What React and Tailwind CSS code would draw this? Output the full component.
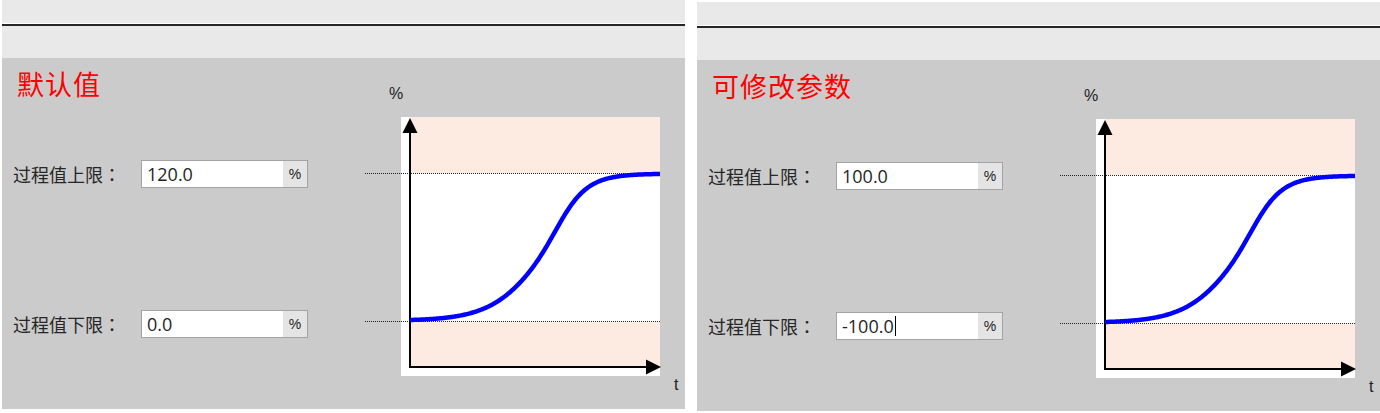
import React from 'react';

const CJK = { fontFamily: '"Noto Sans CJK SC", "Noto Sans", sans-serif' };
const CJK_CENTERED = { fontFamily: '"Noto Sans CJK TC", "Noto Sans CJK SC", sans-serif' };

// S-shaped ramp from the low limit (y=203) to the high limit (y=57).
// Logistic whose width eases from wide (left tail) to narrower (right shoulder).
const sig = (x) => {
    const s = 22 - 4 * Math.tanh((x - 181) / 30);
    return 1 / (1 + Math.exp(-(x - 181) / s));
};

const buildCurve = () => {
    const f0 = sig(45);
    const f1 = sig(295);
    const pts = [];
    for (let x = 45; x <= 295; x += 1) {
        const y = 203 - 146 * (sig(x) - f0) / (f1 - f0);
        pts.push(`${x},${y.toFixed(2)}`);
    }
    return 'M' + pts.join(' L');
};

const curve = buildCurve();

const LimitChart = () => (
    <svg width="297" height="260" viewBox="0 0 297 260" className="block">
        <rect x="36" y="0" width="259" height="259" fill="#ffffff" />
        <rect x="45" y="0" width="250" height="56" fill="#fdebe1" />
        <rect x="45" y="205" width="250" height="45" fill="#fdebe1" />
        <line x1="0" y1="56.5" x2="295" y2="56.5" stroke="#222" strokeWidth="1" strokeDasharray="1 1" />
        <line x1="0" y1="204.5" x2="295" y2="204.5" stroke="#222" strokeWidth="1" strokeDasharray="1 1" />
        {/* axes */}
        <line x1="45" y1="251" x2="45" y2="12" stroke="#000" strokeWidth="2" />
        <polygon points="45,1 37.5,16 52.5,16" fill="#000" />
        <line x1="44" y1="250" x2="283" y2="250" stroke="#000" strokeWidth="2" />
        <polygon points="296,250 281,242.5 281,257.5" fill="#000" />
        <path d={curve} fill="none" stroke="#0000ff" strokeWidth="4.5" strokeLinejoin="round" />
    </svg>
);

const LimitField = ({ label, value, caret }) => (
    <div className="flex items-center">
        <span className="w-[128px] text-[18px] leading-none text-[#262626]" style={CJK}>
            {label}
            <span style={CJK_CENTERED}>：</span>
        </span>
        <div className="flex h-[28px] w-[167px] border border-[#a3a3a3] bg-white">
            <div className="flex flex-1 items-center pl-[5px] font-['Open_Sans',sans-serif] text-[18px] leading-none text-[#1f1f1f]">
                {value}
                {caret && <span className="ml-px h-[20px] w-px bg-black" />}
            </div>
            <div className="flex w-[24px] items-center justify-center bg-[#e4e4e4] font-['Liberation_Sans',sans-serif] text-[14px] text-[#222]">
                %
            </div>
        </div>
    </div>
);

const Panel = ({ title, high, low, editing, className = '' }) => (
    <div className={`flex h-[409px] w-[683px] shrink-0 flex-col ${className}`}>
        <div className="h-[23px] bg-[#e9e9e9]" />
        <div className="h-px bg-white" />
        <div className="h-[2px] bg-[#262626]" />
        <div className="h-[32px] bg-[#e9e9e9]" />
        <div className="flex flex-1 bg-[#cbcbcb]">
            <div className="w-[363px] shrink-0">
                <h2 className="ml-[15px] mt-[12px] text-[27px] font-normal leading-none tracking-[1px] text-[#ff0000]" style={CJK}>
                    {title}
                </h2>
                <div className="ml-[11px] mt-[63px]">
                    <LimitField label="过程值上限" value={high} />
                </div>
                <div className="ml-[11px] mt-[122px]">
                    <LimitField label="过程值下限" value={low} caret={editing} />
                </div>
            </div>
            <div className="flex-1">
                <div className="ml-[24px] mt-[28px] font-['Liberation_Sans',sans-serif] text-[16px] leading-none text-[#222]">%</div>
                <div className="mt-[15px]">
                    <LimitChart />
                </div>
                <div className="ml-[309px] font-['Liberation_Sans',sans-serif] text-[16px] leading-none text-[#222]">t</div>
            </div>
        </div>
    </div>
);

export default function App() {
    return (
        <div className="flex h-[413px] w-[1380px] gap-[12px] overflow-hidden bg-white pl-[2px]">
            <Panel title="默认值" high="120.0" low="0.0" />
            <Panel title="可修改参数" high="100.0" low="-100.0" editing className="mt-[2px]" />
        </div>
    );
}
